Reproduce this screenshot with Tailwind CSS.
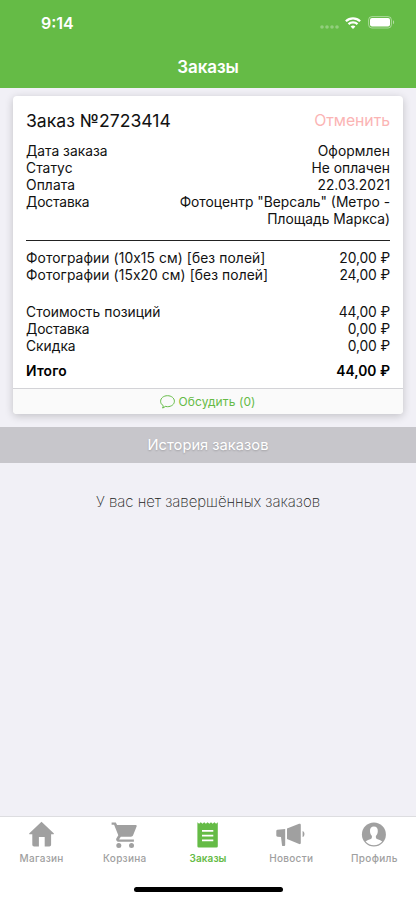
<!DOCTYPE html>
<html lang="ru">
<head>
<meta charset="utf-8">
<title>Заказы</title>
<script src="https://cdn.jsdelivr.net/npm/@tailwindcss/browser@4"></script>
</head>
<body class="font-['Inter','Liberation_Sans',sans-serif] bg-[#f1f0f6]">
<div class="w-[416px] h-[900px] flex flex-col overflow-hidden bg-[#f1f0f6] text-[#111]">
  <header class="h-[88px] shrink-0 bg-[#65bb46] text-white">
    <div class="h-[45px] flex items-center justify-between pl-[41px] pr-[21px]">
      <span class="text-[16px] leading-5 font-semibold">9:14</span>
      <div class="flex items-center">
        <svg class="w-[20px] h-[14px]" viewBox="0 0 20 14" fill="#fff" fill-opacity=".3"><circle cx="2" cy="11" r="1.8"/><circle cx="7" cy="11" r="1.8"/><circle cx="12" cy="11" r="1.8"/><circle cx="17" cy="11" r="1.8"/></svg>
        <svg class="w-[16px] h-[12px] ml-[5px]" viewBox="0 0 16 12" fill="none" stroke="#fff" stroke-width="2.3"><path d="M.9 4.2C4.9.3 11.1.3 15.1 4.2M3.5 7.1C6 4.8 10 4.8 12.5 7.1"/><path d="M8 11.9 5.6 9.5C7 8.2 9 8.2 10.4 9.5Z" fill="#fff" stroke="none"/></svg>
        <svg class="w-[27px] h-[13px] ml-[7px]" viewBox="0 0 27 13"><rect x=".6" y=".6" width="22.8" height="11.4" rx="3.3" fill="none" stroke="#fff" stroke-opacity=".45"/><rect x="2" y="2" width="20" height="8.6" rx="2" fill="#fff"/><path d="M25 4.3c1.5.7 1.5 3.3 0 4z" fill="#fff" fill-opacity=".5"/></svg>
      </div>
    </div>
    <h1 class="h-[43px] pt-[2px] flex items-center justify-center text-[17px] tracking-[-.1px] font-semibold">Заказы</h1>
  </header>
  <main class="flex-1 pt-[8px]">
    <section class="mx-[13px] h-[318px] bg-white rounded-[4px] overflow-hidden shadow-[0_2px_9px_rgba(0,0,0,0.2)] flex flex-col">
      <div class="px-[13px] flex-1 text-[13.8px] leading-[17px]">
        <div class="flex justify-between items-center h-[47px] pt-[1px]">
          <h2 class="text-[17.6px]">Заказ №2723414</h2><button class="text-[15.8px] tracking-[-.05px] text-[#fbb4b4]">Отменить</button>
        </div>
        <div class="flex justify-between"><span>Дата заказа</span><span class="tracking-[.1px]">Оформлен</span></div>
        <div class="flex justify-between"><span class="tracking-[.05px]">Статус</span><span>Не оплачен</span></div>
        <div class="flex justify-between"><span class="tracking-[.1px]">Оплата</span><span>22.03.2021</span></div>
        <div class="flex justify-between"><span class="tracking-[-.15px]">Доставка</span><span class="text-right">Фотоцентр "Версаль" (Метро -<br>Площадь Маркса)</span></div>
        <div class="h-px bg-[#222] mt-[12px] mb-[9px]"></div>
        <div class="flex justify-between"><span class="tracking-[.1px]">Фотографии (10x15 см) [без полей]</span><span class="tracking-[-.1px]">20,00 ₽</span></div>
        <div class="flex justify-between"><span class="tracking-[.1px]">Фотографии (15x20 см) [без полей]</span><span class="tracking-[-.1px]">24,00 ₽</span></div>
        <div class="flex justify-between mt-5"><span class="tracking-[.05px]">Стоимость позиций</span><span class="tracking-[-.1px]">44,00 ₽</span></div>
        <div class="flex justify-between"><span class="tracking-[-.15px]">Доставка</span><span class="tracking-[-.1px]">0,00 ₽</span></div>
        <div class="flex justify-between"><span>Скидка</span><span class="tracking-[-.1px]">0,00 ₽</span></div>
        <div class="flex justify-between mt-2 font-semibold text-black"><span class="tracking-[.2px]">Итого</span><span>44,00 ₽</span></div>
      </div>
      <button class="h-[26px] shrink-0 border-t border-[#d3d3d7] bg-[#fafafa] flex items-center justify-center gap-[3px] text-[12px] tracking-[.1px] text-[#65bb46]">
        <svg class="w-[15px] h-[14px]" viewBox="0 0 15 14" fill="none" stroke="#65bb46" stroke-width="1"><path d="M3.2 10.6C1.5 9.6.6 8.1.6 6.3.6 3.1 3.6.7 7.5.7s6.9 2.4 6.9 5.5-3 5.5-6.9 5.5c-.8 0-1.6-.1-2.3-.3-.7.8-1.6 1.4-2.7 1.6.6-.7.9-1.5.7-2.4Z"/></svg>
        <span>Обсудить (0)</span>
      </button>
    </section>
    <h2 class="mt-[13px] h-[36px] pt-[1px] bg-[#c7c6cb] flex items-center justify-center text-[14.7px] text-white [text-shadow:0_1px_2px_rgba(0,0,0,0.2)]">История заказов</h2>
    <p class="mt-[29px] text-center text-[15px] tracking-[-.05px] leading-5 font-extralight text-[#222]">У вас нет завершённых заказов</p>
  </main>
  <nav class="h-[84px] shrink-0 border-t border-[#dddde0] bg-white flex flex-col items-center">
    <div class="w-full grid grid-cols-5 h-[66px] pt-[4px] text-[10px] leading-[14px] tracking-[.3px] font-medium text-[#a0a0a0]">
      <div class="flex flex-col items-center gap-[2px]"><svg class="w-[28px] h-[28px]" viewBox="0 0 28 28" fill="#a0a0a0"><path d="M13.5.8 25.7 12.2c.4.4.2 1-.4 1h-2.2v10.6a1.8 1.8 0 0 1-1.8 1.8h-4.6v-9.7h-5.8v9.7H6.1a1.8 1.8 0 0 1-1.8-1.8V13.2H1.8c-.6 0-.8-.6-.4-1Z"/></svg><span>Магазин</span></div>
      <div class="flex flex-col items-center gap-[2px]"><svg class="w-[28px] h-[28px]" viewBox="0 0 28 28" fill="#a0a0a0"><path d="M.6 1.5h4.2L6.1 4h18.7c.8 0 1.2.8.8 1.5L22.2 14c-.4 1-1.2 1.7-2.2 1.7H9.8l-1.5 2.2c-.2.3 0 .6.4.6h14.2v2.2H7.7c-2 0-3.2-1.9-2.2-3.5l1.8-3L3.1 3.8H.6Z"/><circle cx="7.8" cy="24.5" r="2.5"/><circle cx="20.5" cy="24.5" r="2.5"/></svg><span>Корзина</span></div>
      <div class="flex flex-col items-center gap-[2px] text-[#65bb46] font-semibold tracking-[.1px]"><svg class="w-[28px] h-[28px]" viewBox="0 0 28 28"><path d="M3.4 1.3 5.1 2.7l1.7-1.4L8.5 2.7l1.7-1.4L11.9 2.7l1.7-1.4 1.7 1.4L17 1.3l1.7 1.4 1.7-1.4 1.7 1.4 1.7-1.4V25.2a1.3 1.3 0 0 1-1.3 1.3H4.7A1.3 1.3 0 0 1 3.4 25.2Z" fill="#65bb46"/><path d="M8 9.8h11.3M8 14.6h11.3M8 19.4h11.3" stroke="#fff" stroke-width="1.7"/></svg><span>Заказы</span></div>
      <div class="flex flex-col items-center gap-[2px]"><svg class="w-[30px] h-[28px]" viewBox="0 0 30 28" fill="#a0a0a0"><path d="M1.4 8.8 9.2 7.9v15.9c0 .9-.5 1.3-1.2 1.3H7c-.6 0-.9-.3-1-.9L5 16.1l-3.4-.3C.7 15.7.3 15.1.3 14.3v-4.2c0-.7.4-1.2 1.1-1.3ZM11 7.4 23.1 2.8c.9-.4 1.7.1 1.7 1v18.3c0 .8-.7 1.3-1.6 1L11 18.1ZM26.6 9.9c2.5.7 2.5 5.5 0 6.1Z"/></svg><span>Новости</span></div>
      <div class="flex flex-col items-center gap-[2px]"><svg class="w-[28px] h-[28px]" viewBox="0 0 28 28"><circle cx="13.9" cy="13.5" r="12" fill="#a0a0a0"/><path d="M13.9 5.6c2.6 0 4.1 1.9 3.9 4.6-.1 2-.8 3.5-1.8 4.5-.4 1.3-.2 2.6 1 3.2 1.6.8 4 1 5.2 2.7-2 2.3-4.9 3.7-8.3 3.7s-6.3-1.4-8.3-3.7c1.2-1.7 3.6-1.9 5.2-2.7 1.2-.6 1.4-1.9 1-3.2-1-1-1.7-2.5-1.8-4.5-.2-2.7 1.3-4.6 3.9-4.6Z" fill="#fff"/></svg><span>Профиль</span></div>
    </div>
    <div class="mt-[4px] w-[149px] h-[5px] rounded-full bg-black"></div>
  </nav>
</div>
</body>
</html>
